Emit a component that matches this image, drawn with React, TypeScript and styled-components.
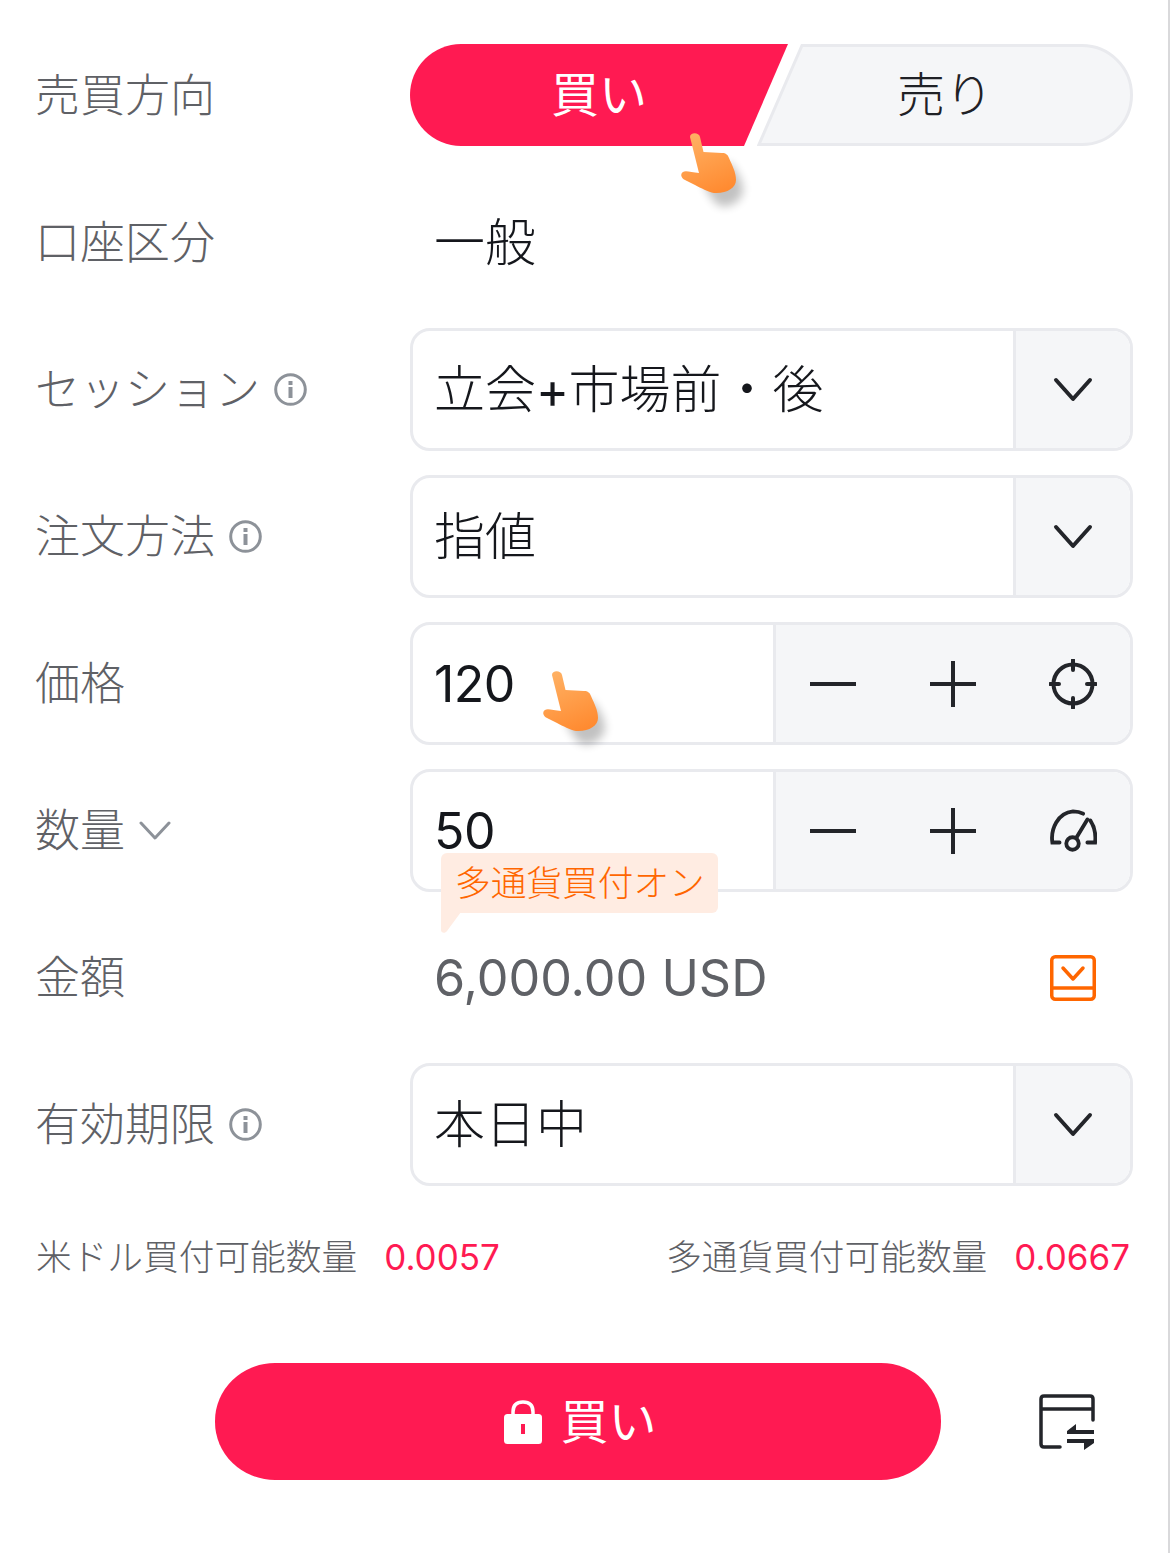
import React from "react";
import styled, { createGlobalStyle } from "styled-components";

const Global = createGlobalStyle`
  html, body { margin: 0; padding: 0; background: #fff; }
  body { font-family: "Inter", "Noto Sans CJK JP", "Noto Sans", sans-serif; }
`;

const Page = styled.div`
  box-sizing: border-box;
  width: 1170px;
  height: 1553px;
  padding: 34px 35px 0 35px;
  border-right: 2px solid #d9d9db;
  background: #fff;
  overflow: hidden;
  position: relative;
`;

const Form = styled.div`
  display: grid;
  grid-auto-rows: 123px;
  row-gap: 24px;
`;

const Row = styled.div`
  display: grid;
  grid-template-columns: 375px 1fr;
  align-items: center;
  min-width: 0;
`;

const Label = styled.div`
  display: flex;
  align-items: center;
  gap: 14px;
  font-size: 45px;
  font-weight: 300;
  line-height: 60px;
  color: #5f6166;
`;

const Toggle = styled.div`
  position: relative;
  display: flex;
  height: 102px;
  align-self: start;
  margin-top: 10px;
`;

const BuySeg = styled.div`
  position: relative;
  z-index: 1;
  width: 378px;
  height: 102px;
  flex: none;
  background: #ff1a52;
  border-radius: 51px 0 0 51px;
  clip-path: polygon(0 0, 100% 0, 334px 100%, 0 100%);
  display: flex;
  align-items: center;
  justify-content: center;
  color: #fff;
  font-size: 48px;
  line-height: 60px;
`;

const SellSeg = styled.div`
  position: relative;
  margin-left: -31px;
  flex: 1;
  height: 102px;
  display: flex;
  align-items: center;
  justify-content: center;
  color: #1f2126;
  font-size: 48px;
  font-weight: 300;
  line-height: 60px;
  span { position: relative; }
`;

const SellShape = styled.svg`
  position: absolute;
  inset: 0;
`;

const StaticValue = styled.div<{ $muted?: boolean }>`
  padding-left: 24px;
  font-size: ${(p) => (p.$muted ? "50.3px" : "51px")};
  font-weight: ${(p) => (p.$muted ? 400 : 300)};
  line-height: 60px;
  color: ${(p) => (p.$muted ? "#5f6166" : "#15171c")};
`;

const AmountRow = styled.div`
  display: flex;
  align-items: center;
  justify-content: space-between;
  padding-right: 37px;
`;

const Control = styled.div`
  box-sizing: border-box;
  display: flex;
  height: 123px;
  border: 3px solid #e9eaee;
  border-radius: 20px;
  overflow: hidden;
  background: #fff;
`;

const ControlValue = styled.div`
  flex: 1;
  min-width: 0;
  display: flex;
  align-items: center;
  padding-left: 21px;
  font-size: 51px;
  font-weight: 300;
  line-height: 60px;
  color: #15171c;
  white-space: pre;
`;

const Latin = styled.span`
  font-size: 50px;
  font-weight: 400;
  letter-spacing: -0.5px;
`;

const SelectArrow = styled.div`
  box-sizing: border-box;
  width: 117px;
  flex: none;
  display: flex;
  align-items: center;
  justify-content: center;
  background: #f5f6f8;
  border-left: 3px solid #e9eaee;
`;

const Stepper = styled.div`
  box-sizing: border-box;
  width: 357px;
  flex: none;
  display: flex;
  align-items: center;
  justify-content: space-between;
  padding: 0 33px 0 34px;
  background: #f5f6f8;
  border-left: 3px solid #e9eaee;
`;

const Anchor = styled.div`
  position: relative;
`;

const Tip = styled.div`
  position: absolute;
  left: 31px;
  top: 84px;
  z-index: 2;
  height: 60px;
  padding: 0 13px 0 14px;
  display: flex;
  align-items: center;
  background: #ffece2;
  border-radius: 6px 6px 6px 0;
  color: #ff6600;
  font-size: 35.7px;
  font-weight: 300;
  line-height: 60px;
  white-space: nowrap;
`;

const TipTail = styled.svg`
  position: absolute;
  left: 0;
  top: 59px;
`;

const Hand = styled.svg<{ $x: number; $y: number }>`
  position: absolute;
  z-index: 3;
  left: ${(p) => p.$x}px;
  top: ${(p) => p.$y}px;
  overflow: visible;
`;

const Stats = styled.div`
  display: flex;
  justify-content: space-between;
  margin-top: 41px;
  height: 60px;
  align-items: center;
  padding: 0 3px 0 1px;
  font-size: 35.7px;
  font-weight: 300;
  color: #5f6166;
`;

const Stat = styled.div`
  display: flex;
  align-items: center;
  gap: 27px;
  line-height: 60px;
  white-space: nowrap;
`;

const StatValue = styled.span`
  color: #ff1a52;
  font-size: 35px;
  font-weight: 400;
`;

const Footer = styled.div`
  display: flex;
  align-items: center;
  margin-top: 76px;
  padding-left: 180px;
`;

const BuyButton = styled.div`
  box-sizing: border-box;
  width: 726px;
  height: 117px;
  flex: none;
  padding-left: 5px;
  background: #ff1a52;
  border-radius: 60px / 58px;
  display: flex;
  align-items: center;
  justify-content: center;
  gap: 18px;
  color: #fff;
  font-size: 48px;
  line-height: 60px;
`;

const SwitchSlot = styled.div`
  margin-left: 98px;
  display: flex;
`;

const Chevron = () => (
  <svg width="40" height="26" viewBox="0 0 40 26" fill="none">
    <path d="M3 3 L20 22 L37 3" stroke="#23252a" strokeWidth="4" strokeLinecap="round" strokeLinejoin="round" />
  </svg>
);

const SmallChevron = () => (
  <svg width="32" height="20" viewBox="0 0 32 20" fill="none">
    <path d="M2 2 L16 17 L30 2" stroke="#8d9299" strokeWidth="3" strokeLinecap="round" strokeLinejoin="round" />
  </svg>
);

const Info = () => (
  <svg width="33" height="33" viewBox="0 0 33 33" fill="none">
    <circle cx="16.5" cy="16.5" r="14.8" stroke="#8d9299" strokeWidth="3" />
    <rect x="14.5" y="14" width="4" height="11" fill="#8d9299" />
    <rect x="14.5" y="8" width="4" height="4" fill="#8d9299" />
  </svg>
);

const Minus = () => (
  <svg width="46" height="46" viewBox="0 0 46 46" fill="none">
    <path d="M0 23 H46" stroke="#23252a" strokeWidth="4" />
  </svg>
);

const Plus = () => (
  <svg width="46" height="46" viewBox="0 0 46 46" fill="none">
    <path d="M0 23 H46 M23 0 V46" stroke="#23252a" strokeWidth="4" />
  </svg>
);

const Target = () => (
  <svg width="48" height="50" viewBox="0 0 48 50" fill="none">
    <circle cx="24" cy="25" r="19.5" stroke="#23252a" strokeWidth="4" />
    <path d="M24 1 V11 M24 39 V49 M1 25 H10 M38 25 H47" stroke="#23252a" strokeWidth="4" strokeLinecap="round" />
  </svg>
);

const Gauge = () => (
  <svg width="48" height="46" viewBox="0 0 50 46" fill="none">
    <path
      d="M11 35 H3.5 C1.5 21 9 4 25 2.5 C29 2.5 33 3.5 35.5 5"
      stroke="#23252a"
      strokeWidth="4"
      strokeLinecap="round"
    />
    <path d="M43 12 C47 18 49 27 48 35 H40" stroke="#23252a" strokeWidth="4" strokeLinecap="round" />
    <circle cx="24.5" cy="36" r="6.5" stroke="#23252a" strokeWidth="4" />
    <path d="M28.5 30 L40 11" stroke="#23252a" strokeWidth="4" strokeLinecap="round" />
  </svg>
);

const Download = () => (
  <svg width="46" height="46" viewBox="0 0 46 46" fill="none">
    <rect x="1.75" y="1.75" width="42.5" height="42.5" rx="3.5" stroke="#ff6600" strokeWidth="3.5" />
    <path d="M1.5 33 H44.5" stroke="#ff6600" strokeWidth="3.5" />
    <path d="M13 13 L23 24 L33 13" stroke="#ff6600" strokeWidth="3.5" strokeLinecap="round" strokeLinejoin="round" />
  </svg>
);

const Lock = () => (
  <svg width="38" height="44" viewBox="0 0 38 44" fill="none">
    <path d="M9 18 V12 C9 5 13 2 19 2 C25 2 29 5 29 12 V18" stroke="#fff" strokeWidth="3.5" />
    <rect x="0" y="14" width="38" height="30" rx="3.5" fill="#fff" />
    <rect x="17" y="24" width="4" height="10" fill="#ff1a52" />
  </svg>
);

const SwitchIcon = () => (
  <svg width="56" height="56" viewBox="0 0 56 56" fill="none">
    <path
      d="M54 26 V5 C54 3 53 2 51 2 H5 C3 2 2 3 2 5 V50 C2 52 3 53 5 53 H21"
      stroke="#23252a"
      strokeWidth="3.5"
      strokeLinecap="round"
    />
    <path d="M2 15 H54" stroke="#23252a" strokeWidth="3.5" />
    <path d="M28 37 L37 30 V36 H55 V40 H28 Z" fill="#23252a" />
    <path d="M28 45 H55 V49 L45 56 V49 H28 Z" fill="#23252a" />
  </svg>
);

const handPath =
  "M9 5 C9 0 18 0 19 5 L22.5 20 L41 21 C45 21 47 23 48 26 C51 33 55 40 55 48 C55 56 45 62 33 61 C27 60 20 56 14 53 L4 48 C0 46 -1 42 2 40 C4 38 10 40 18 41 Z";

const HandIcon = ({ x, y, id }: { x: number; y: number; id: string }) => (
  <Hand $x={x} $y={y} width="56" height="62" viewBox="0 0 56 62" fill="none">
    <defs>
      <linearGradient id={id} x1="0.3" y1="0" x2="0.7" y2="1">
        <stop offset="0" stopColor="#ffb062" />
        <stop offset="1" stopColor="#ff8a30" />
      </linearGradient>
      <filter id={`${id}b`} x="-50%" y="-50%" width="200%" height="200%">
        <feGaussianBlur stdDeviation="5" />
      </filter>
    </defs>
    <path
      d="M22 50 L48 30 C54 36 62 48 62 58 C62 68 50 76 40 74 C34 73 26 60 22 50 Z"
      fill="#000"
      opacity="0.24"
      filter={`url(#${id}b)`}
    />
    <path d={handPath} fill={`url(#${id})`} />
  </Hand>
);

const SelectControl = ({ children }: { children: React.ReactNode }) => (
  <Control>
    <ControlValue>{children}</ControlValue>
    <SelectArrow>
      <Chevron />
    </SelectArrow>
  </Control>
);

const NumberControl = ({ value, icon }: { value: string; icon: React.ReactNode }) => (
  <Control>
    <ControlValue>
      <Latin>{value}</Latin>
    </ControlValue>
    <Stepper>
      <Minus />
      <Plus />
      {icon}
    </Stepper>
  </Control>
);

export default function App() {
  return (
    <>
      <Global />
      <Page>
        <Form>
          <Row>
            <Label>売買方向</Label>
            <Toggle>
              <BuySeg>買い</BuySeg>
              <SellSeg>
                <SellShape width="376" height="102" viewBox="0 0 376 102" fill="none">
                  <path
                    d="M45 1.5 H325 A49.5 49.5 0 0 1 325 100.5 H2 Z"
                    fill="#f5f6f8"
                    stroke="#e9eaee"
                    strokeWidth="3"
                  />
                </SellShape>
                <span>売り</span>
              </SellSeg>
              <HandIcon x={271} y={88} id="handA" />
            </Toggle>
          </Row>
          <Row>
            <Label>口座区分</Label>
            <StaticValue>一般</StaticValue>
          </Row>
          <Row>
            <Label>セッション<Info /></Label>
            <SelectControl>
              <span>立会<Latin>+</Latin>市場前・後</span>
            </SelectControl>
          </Row>
          <Row>
            <Label>注文方法<Info /></Label>
            <SelectControl>指値</SelectControl>
          </Row>
          <Row>
            <Label>価格</Label>
            <Anchor>
              <NumberControl value="120" icon={<Target />} />
              <HandIcon x={133} y={48} id="handB" />
            </Anchor>
          </Row>
          <Row>
            <Label>数量<SmallChevron /></Label>
            <Anchor>
              <NumberControl value="50" icon={<Gauge />} />
              <Tip>
                多通貨買付オン
                <TipTail width="22" height="22" viewBox="0 0 22 22">
                  <path d="M0 0 H20 L6 19 C4 22 0 21 0 18 Z" fill="#ffece2" />
                </TipTail>
              </Tip>
            </Anchor>
          </Row>
          <Row>
            <Label>金額</Label>
            <AmountRow>
              <StaticValue $muted>6,000.00 USD</StaticValue>
              <Download />
            </AmountRow>
          </Row>
          <Row>
            <Label>有効期限<Info /></Label>
            <SelectControl>本日中</SelectControl>
          </Row>
        </Form>
        <Stats>
          <Stat>米ドル買付可能数量<StatValue>0.0057</StatValue></Stat>
          <Stat>多通貨買付可能数量<StatValue>0.0667</StatValue></Stat>
        </Stats>
        <Footer>
          <BuyButton>
            <Lock />
            買い
          </BuyButton>
          <SwitchSlot>
            <SwitchIcon />
          </SwitchSlot>
        </Footer>
      </Page>
    </>
  );
}
